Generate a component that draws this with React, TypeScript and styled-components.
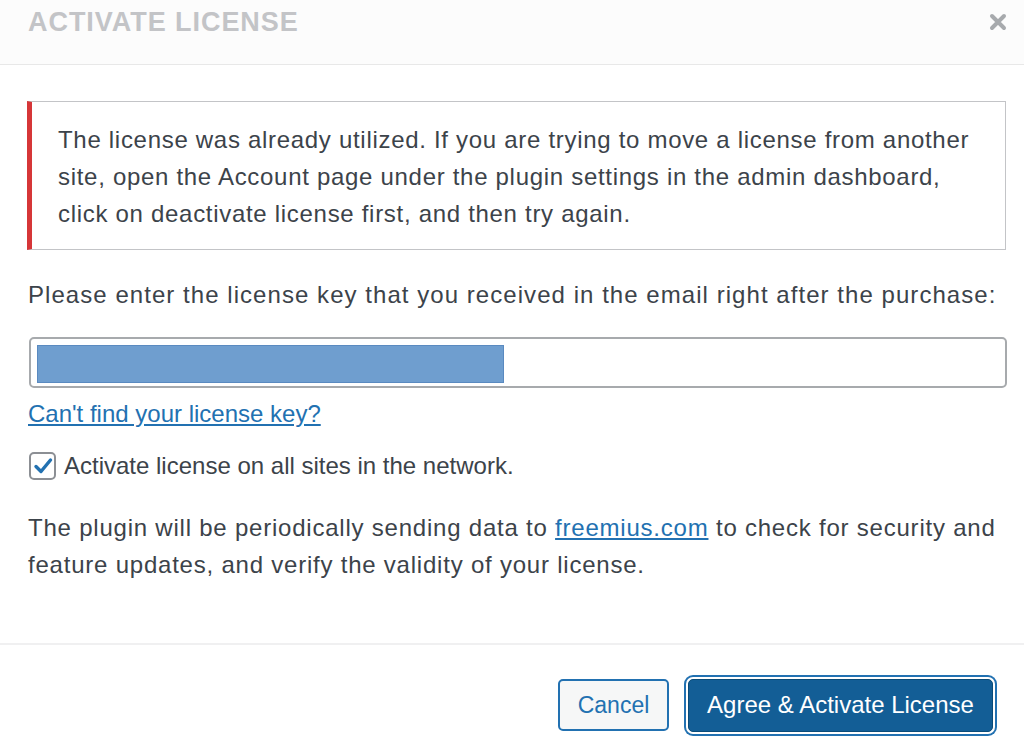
import React from "react";
import styled, { createGlobalStyle } from "styled-components";

const GlobalStyle = createGlobalStyle`
  html, body {
    margin: 0;
    padding: 0;
    background: #ffffff;
  }
  body {
    font-family: "Liberation Sans", Arial, sans-serif;
    color: #3c434a;
  }
`;

export default function App() {
  return (
    <>
      <GlobalStyle />
      <Modal>
        <Header>
          <Title>Activate License</Title>
          <CloseButton aria-label="Close">
            <svg width="20" height="20" viewBox="0 0 20 20">
              <path d="M4 4 L16 16 M16 4 L4 16" stroke="#a7aaad" strokeWidth="4" strokeLinecap="round" />
            </svg>
          </CloseButton>
        </Header>
        <Body>
          <Notice>
            The license was already utilized. If you are trying to move a license from another<br />
            site, open the Account page under the plugin settings in the admin dashboard,<br />
            click on deactivate license first, and then try again.
          </Notice>
          <Label>Please enter the license key that you received in the email right after the purchase:</Label>
          <KeyInput>
            <Redacted />
          </KeyInput>
          <HelpLink href="#">Can't find your license key?</HelpLink>
          <CheckRow>
            <CheckBox>
              <svg width="20" height="18" viewBox="0 0 20 18">
                <path d="M3 9.5 L8 14.5 L17.5 3" fill="none" stroke="#2271b1" strokeWidth="3.4" strokeLinecap="round" strokeLinejoin="round" />
              </svg>
            </CheckBox>
            <span>Activate license on all sites in the network.</span>
          </CheckRow>
          <Paragraph>
            The plugin will be periodically sending data to <TextLink href="#">freemius.com</TextLink> to check for security and<br />
            feature updates, and verify the validity of your license.
          </Paragraph>
        </Body>
        <Footer>
          <Button>Cancel</Button>
          <Button primary>Agree &amp; Activate License</Button>
        </Footer>
      </Modal>
    </>
  );
}

const Modal = styled.div`
  width: 1024px;
  height: 747px;
  display: flex;
  flex-direction: column;
  background: #ffffff;
  overflow: hidden;
`;

const Header = styled.div`
  height: 75px;
  margin-top: -10px;
  flex-shrink: 0;
  display: flex;
  align-items: center;
  justify-content: space-between;
  padding: 0 14px 10px 28px;
  box-sizing: border-box;
  background: #fcfcfc;
  border-bottom: 1px solid #e8e8e8;
`;

const Title = styled.h2`
  margin: 0;
  font-size: 27px;
  font-weight: 700;
  text-transform: uppercase;
  color: #c3c4c7;
  letter-spacing: 0.95px;
`;

const CloseButton = styled.div`
  display: flex;
  align-items: center;
  justify-content: center;
  width: 24px;
  height: 24px;
`;

const Body = styled.div`
  flex: 1;
  display: flex;
  flex-direction: column;
  padding: 36px 17px 0 28px;
  font-size: 24px;
  line-height: 37px;
  white-space: nowrap;
`;

const Notice = styled.div`
  border: 1px solid #c3c4c7;
  border-left: 5px solid #d63638;
  padding: 19px 20px 17px 26px;
  margin-left: -1px;
  margin-right: 1px;
  color: #3c434a;
  letter-spacing: 0.7px;
`;

const Label = styled.p`
  margin: 26px 0 0;
  letter-spacing: 1.05px;
`;

const KeyInput = styled.div`
  margin: 24px 0 0 1px;
  height: 51px;
  box-sizing: border-box;
  border: 2px solid #a7aaad;
  border-radius: 5px;
  padding: 6px 6px;
`;

const Redacted = styled.div`
  width: 467px;
  height: 38px;
  background: #6f9ecf;
  border: 1px solid #5a8ac0;
  box-sizing: border-box;
`;

const HelpLink = styled.a`
  align-self: flex-start;
  margin-top: 7px;
  color: #2271b1;
  text-decoration: underline;
`;

const CheckRow = styled.label`
  display: flex;
  align-items: center;
  gap: 8px;
  margin-top: 15px;
  color: #3c434a;
`;

const CheckBox = styled.span`
  width: 27px;
  height: 28px;
  box-sizing: border-box;
  border: 2px solid #8c8f94;
  border-radius: 5px;
  display: flex;
  align-items: center;
  justify-content: center;
  margin-left: 1px;
`;

const Paragraph = styled.p`
  margin: 25px 0 0;
  letter-spacing: 0.78px;
`;

const TextLink = styled.a`
  color: #2271b1;
  text-decoration: underline;
`;

const Footer = styled.div`
  height: 104px;
  flex-shrink: 0;
  border-top: 2px solid #f0f0f1;
  display: flex;
  align-items: center;
  justify-content: flex-end;
  gap: 19px;
  padding: 18px 31px 0 0;
  box-sizing: border-box;
`;

const Button = styled.button<{ primary?: boolean }>`
  font-family: "Liberation Sans", Arial, sans-serif;
  font-size: ${({ primary }) => (primary ? "24px" : "23px")};
  box-sizing: border-box;
  height: ${({ primary }) => (primary ? "53px" : "52px")};
  width: ${({ primary }) => (primary ? "305px" : "111px")};
  padding: 0;
  border-radius: 5px;
  cursor: pointer;
  background: ${({ primary }) => (primary ? "#135e96" : "#f6f7f7")};
  color: ${({ primary }) => (primary ? "#ffffff" : "#2271b1")};
  border: ${({ primary }) => (primary ? "1px solid #0a4b78" : "2px solid #2271b1")};
  box-shadow: ${({ primary }) => (primary ? "0 0 0 2px #ffffff, 0 0 0 4px #2271b1" : "none")};
`;
